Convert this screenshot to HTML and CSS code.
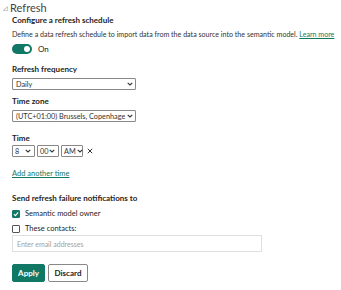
FILE: index.html
```html
<!DOCTYPE html>
<html lang="en">
<head>
  <meta charset="UTF-8">
  <title>Refresh</title>
  <link rel="stylesheet" href="styles.css">
</head>
<body>
  <div class="panel">
    <!-- Cabecalho da secao -->
    <div class="section-title"><span class="caret">&#9727;</span>Refresh</div>

    <div class="body">
      <div class="label strong">Configure a refresh schedule</div>
      <p class="desc">Define a data refresh schedule to import data from the data source into the semantic model. <a href="#">Learn more</a></p>

      <div class="toggle-row">
        <span class="toggle"><span class="knob"></span></span>
        <span>On</span>
      </div>

      <div class="label strong freq-label">Refresh frequency</div>
      <div class="select wide"><span class="val">Daily</span>
        <svg class="chev" width="6" height="4" viewBox="0 0 6 4"><path d="M0.7 0.8 L3 3 L5.3 0.8" fill="none" stroke="#333" stroke-width="1.1"/></svg>
      </div>

      <div class="label strong tz-label">Time zone</div>
      <div class="select wide"><span class="val">(UTC+01:00) Brussels, Copenhagen, Madrid, Paris</span>
        <svg class="chev" width="6" height="4" viewBox="0 0 6 4"><path d="M0.7 0.8 L3 3 L5.3 0.8" fill="none" stroke="#333" stroke-width="1.1"/></svg>
      </div>

      <div class="label strong time-label">Time</div>
      <div class="time-row">
        <div class="select small"><span>8</span>
          <svg class="chev" width="6" height="4" viewBox="0 0 6 4"><path d="M0.7 0.8 L3 3 L5.3 0.8" fill="none" stroke="#333" stroke-width="1.1"/></svg>
        </div>
        <div class="select small"><span>00</span>
          <svg class="chev" width="6" height="4" viewBox="0 0 6 4"><path d="M0.7 0.8 L3 3 L5.3 0.8" fill="none" stroke="#333" stroke-width="1.1"/></svg>
        </div>
        <div class="select small"><span>AM</span>
          <svg class="chev" width="6" height="4" viewBox="0 0 6 4"><path d="M0.7 0.8 L3 3 L5.3 0.8" fill="none" stroke="#333" stroke-width="1.1"/></svg>
        </div>
        <svg class="remove" width="6" height="6" viewBox="0 0 6 6"><path d="M0.8 0.8 L5.2 5.2 M5.2 0.8 L0.8 5.2" stroke="#333" stroke-width="1"/></svg>
      </div>

      <a class="add-time" href="#">Add another time</a>

      <div class="label strong notify">Send refresh failure notifications to</div>
      <div class="check-row"><span class="box checked">
        <svg width="7" height="6" viewBox="0 0 7 6"><path d="M1 3.2 L2.8 5 L6 1" fill="none" stroke="#fff" stroke-width="1.3"/></svg>
      </span>Semantic model owner</div>
      <div class="check-row"><span class="box"></span>These contacts:</div>
      <div class="email">Enter email addresses</div>

      <div class="actions">
        <button class="btn primary">Apply</button>
        <button class="btn">Discard</button>
      </div>
    </div>
  </div>
</body>
</html>
```

FILE: styles.css
```css
* {
  margin: 0;
  padding: 0;
  box-sizing: border-box;
}

body {
  font-family: Lato, "Open Sans", sans-serif;
  background-color: #fff;
  color: #252423;
  font-size: 8px;
}

.panel {
  padding: 1px 0 0 3px;
}

/* Titulo */
.section-title {
  font-size: 11px;
  color: #444;
  display: flex;
  align-items: center;
  height: 13px;
}

.caret {
  font-size: 6px;
  color: #666;
  margin-right: 2px;
}

.body {
  padding-left: 9px;
}

.label {
  font-size: 8px;
  line-height: 11px;
}

.strong {
  font-weight: bold;
}

.body > .label:first-child {
  margin-top: 1px;
}

.desc {
  margin-top: 3px;
  line-height: 11px;
  font-size: 7.1px;
  white-space: nowrap;
  color: #333;
}

a {
  color: #117865;
  text-decoration: underline;
}

/* Toggle */
.toggle-row {
  display: flex;
  align-items: center;
  gap: 6px;
  margin-top: 4px;
  height: 10px;
}

.toggle {
  width: 20px;
  height: 10px;
  border-radius: 5px;
  background-color: #117865;
  display: flex;
  justify-content: flex-end;
  align-items: center;
  padding-right: 2px;
}

.knob {
  width: 6px;
  height: 6px;
  border-radius: 50%;
  background: #fff;
}

.freq-label {
  margin-top: 10px;
}

.tz-label {
  margin-top: 6px;
}

.time-label {
  margin-top: 11px;
}

/* Selects */
.select {
  display: flex;
  justify-content: space-between;
  align-items: center;
  gap: 2px;
  border: 1px solid #8a8886;
  border-radius: 1px;
  height: 12px;
  padding: 0 2px 0 3px;
  font-size: 7.3px;
  color: #333;
  margin-top: 3px;
  white-space: nowrap;
}

.val {
  overflow: hidden;
  flex: 1;
}

.wide {
  width: 124px;
}

.chev {
  flex-shrink: 0;
}

.time-row {
  display: flex;
  align-items: center;
  gap: 2px;
  margin-top: 1px;
}

.time-row .select {
  margin-top: 0;
  gap: 1px;
  padding: 0 3px 0 2px;
}

.small {
  width: 22px;
}

.small:first-child {
  width: 23px;
}

.remove {
  margin-left: 2px;
}

.add-time {
  display: inline-block;
  margin-top: 11px;
  font-size: 7.5px;
  line-height: 11px;
}

.notify {
  margin-top: 14px;
}

/* Checkboxes */
.check-row {
  display: flex;
  align-items: center;
  gap: 5px;
  font-size: 7.5px;
  height: 9px;
  margin-top: 5px;
}

.check-row + .check-row {
  margin-top: 6px;
}

.box {
  width: 8px;
  height: 8px;
  border: 1px solid #555;
  border-radius: 1px;
  display: flex;
  align-items: center;
  justify-content: center;
}

.box.checked {
  background-color: #117865;
  border-color: #117865;
}

.email {
  margin-top: 2px;
  width: 250px;
  height: 17px;
  border: 1px solid #e1dfdd;
  color: #a19f9d;
  font-size: 7px;
  padding-left: 4px;
  display: flex;
  align-items: center;
}

/* Botoes */
.actions {
  display: flex;
  gap: 3px;
  margin-top: 12px;
}

.btn {
  font-family: inherit;
  font-size: 8px;
  font-weight: bold;
  height: 18px;
  width: 40px;
  border: 1px solid #8a8886;
  border-radius: 2px;
  background: #fff;
  color: #252423;
}

.btn.primary {
  width: 33px;
  background-color: #117865;
  border-color: #117865;
  color: #fff;
}
```
